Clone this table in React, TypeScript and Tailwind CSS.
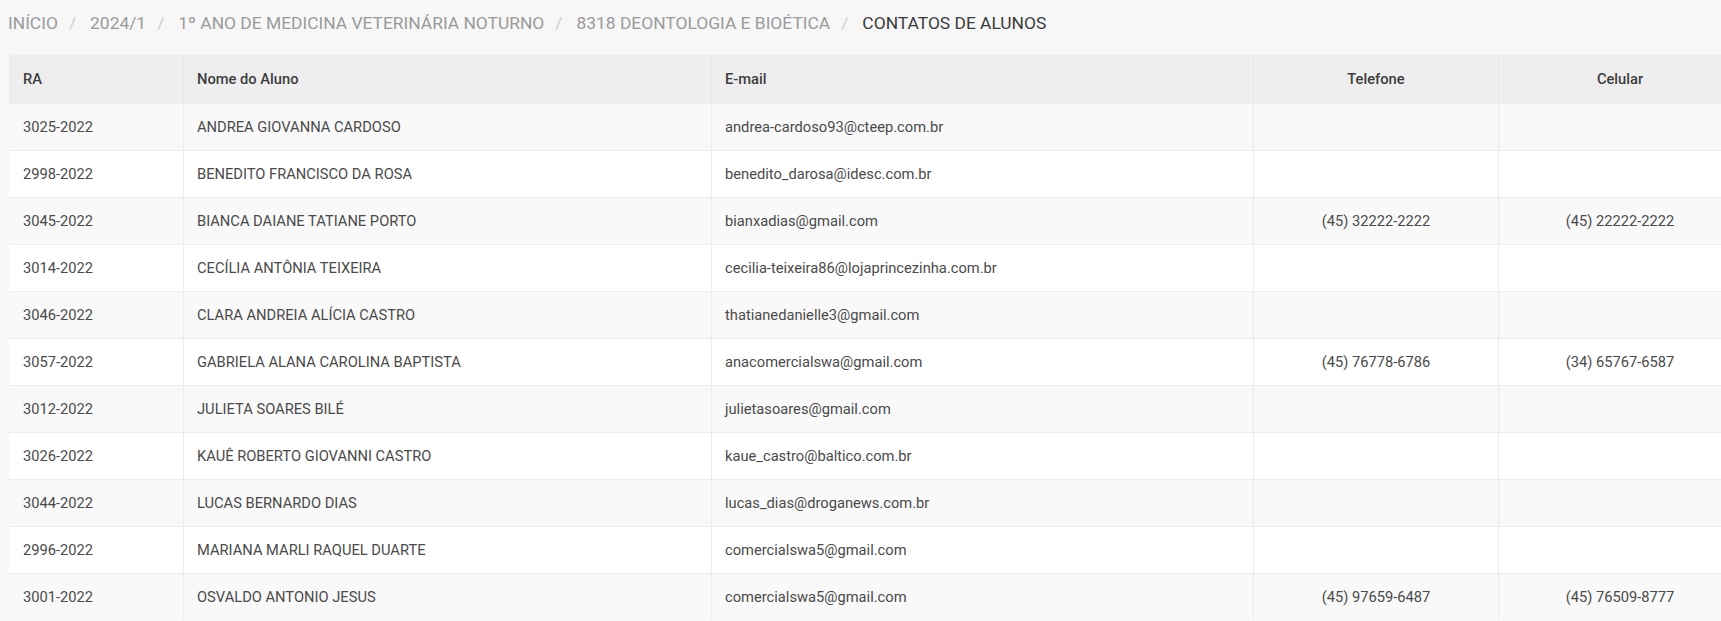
import React from 'react';

type Aluno = {
  ra: string;
  nome: string;
  email: string;
  telefone?: string;
  celular?: string;
};

const alunos: Aluno[] = [
  { ra: '3025-2022', nome: 'ANDREA GIOVANNA CARDOSO', email: 'andrea-cardoso93@cteep.com.br' },
  { ra: '2998-2022', nome: 'BENEDITO FRANCISCO DA ROSA', email: 'benedito_darosa@idesc.com.br' },
  { ra: '3045-2022', nome: 'BIANCA DAIANE TATIANE PORTO', email: 'bianxadias@gmail.com', telefone: '(45) 32222-2222', celular: '(45) 22222-2222' },
  { ra: '3014-2022', nome: 'CECÍLIA ANTÔNIA TEIXEIRA', email: 'cecilia-teixeira86@lojaprincezinha.com.br' },
  { ra: '3046-2022', nome: 'CLARA ANDREIA ALÍCIA CASTRO', email: 'thatianedanielle3@gmail.com' },
  { ra: '3057-2022', nome: 'GABRIELA ALANA CAROLINA BAPTISTA', email: 'anacomercialswa@gmail.com', telefone: '(45) 76778-6786', celular: '(34) 65767-6587' },
  { ra: '3012-2022', nome: 'JULIETA SOARES BILÉ', email: 'julietasoares@gmail.com' },
  { ra: '3026-2022', nome: 'KAUÊ ROBERTO GIOVANNI CASTRO', email: 'kaue_castro@baltico.com.br' },
  { ra: '3044-2022', nome: 'LUCAS BERNARDO DIAS', email: 'lucas_dias@droganews.com.br' },
  { ra: '2996-2022', nome: 'MARIANA MARLI RAQUEL DUARTE', email: 'comercialswa5@gmail.com' },
  { ra: '3001-2022', nome: 'OSVALDO ANTONIO JESUS', email: 'comercialswa5@gmail.com', telefone: '(45) 97659-6487', celular: '(45) 76509-8777' },
];

const crumbs = ['INÍCIO', '2024/1', '1º ANO DE MEDICINA VETERINÁRIA NOTURNO', '8318 DEONTOLOGIA E BIOÉTICA'];

const cols = 'grid grid-cols-[174px_528px_542px_245px_243px]';

export default function App() {
  return (
    <div className="relative h-[621px] w-full overflow-hidden bg-[#f7f7f7] font-['Roboto',sans-serif]">
      <nav className="mt-[1px] flex h-[45px] items-center pl-2 text-[17.4px] text-[#9a9a9a]">
        {crumbs.map((c) => (
          <React.Fragment key={c}>
            <span>{c}</span>
            <span className="pl-[11px] pr-[14px] text-[#cfcfcf]">/</span>
          </React.Fragment>
        ))}
        <span className="text-[#3a3a3a]">CONTATOS DE ALUNOS</span>
      </nav>

      <div className="ml-[9px] mt-[9px] w-[1732px] text-[14.7px]">
        <div className={`${cols} h-[48px] bg-[#eeeeee] font-medium text-[#3d3d3d]`}>
          <div className="flex items-center px-[14px]">RA</div>
          <div className="flex items-center border-l border-[#e6e6e6] px-[13px]">Nome do Aluno</div>
          <div className="flex items-center border-l border-[#e6e6e6] px-[13px]">E-mail</div>
          <div className="flex items-center justify-center border-l border-[#e6e6e6]">Telefone</div>
          <div className="flex items-center justify-center border-l border-[#e6e6e6]">Celular</div>
        </div>
        {alunos.map((a, i) => (
          <div
            key={a.ra}
            className={`${cols} h-[47px] border-t border-[#ececec] text-[#4a4a4a] ${i % 2 === 0 ? 'bg-[#f9f9f9]' : 'bg-white'}`}
          >
            <div className="flex items-center px-[14px]">{a.ra}</div>
            <div className="flex items-center border-l border-[#ececec] px-[13px]">{a.nome}</div>
            <div className="flex items-center border-l border-[#ececec] px-[13px]">{a.email}</div>
            <div className="flex items-center justify-center border-l border-[#ececec]">{a.telefone}</div>
            <div className="flex items-center justify-center border-l border-[#ececec]">{a.celular}</div>
          </div>
        ))}
      </div>

      <div className="absolute left-[1716px] top-[615px] h-[48px] w-[48px] rounded-full bg-[#2f74d0]" />
    </div>
  );
}
